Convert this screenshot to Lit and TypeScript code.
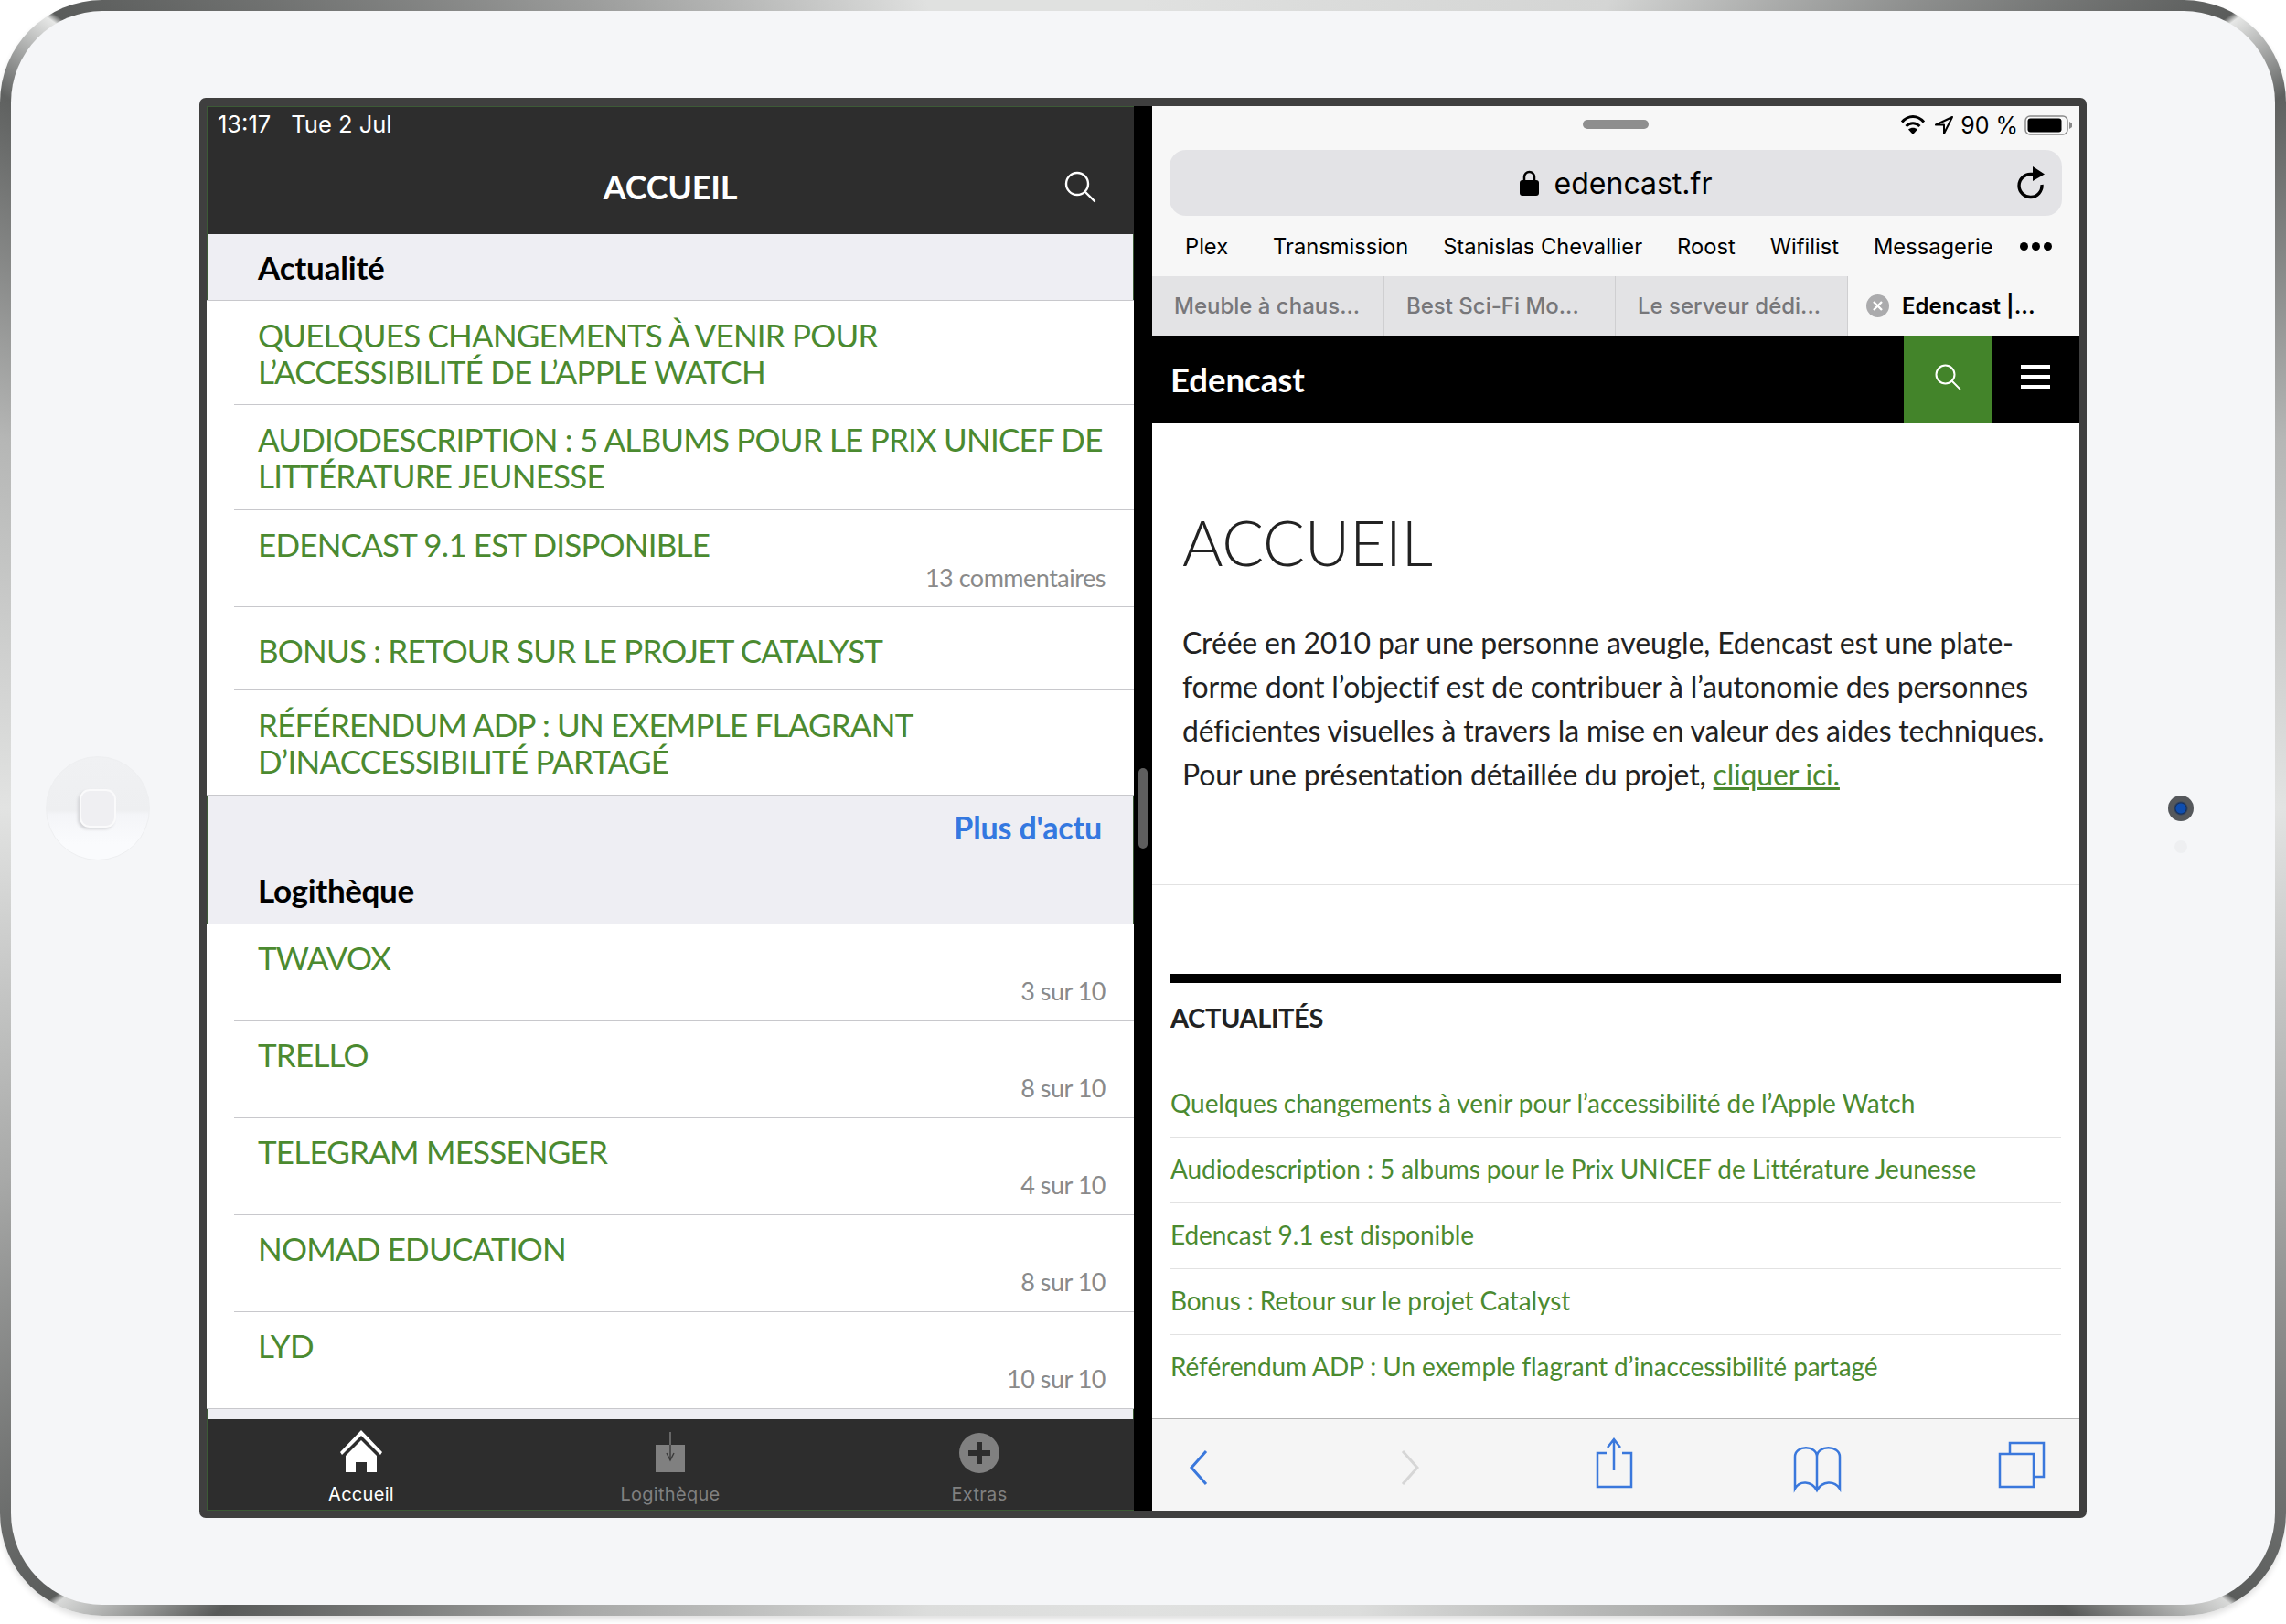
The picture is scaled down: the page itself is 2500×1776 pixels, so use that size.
import { LitElement, html, css } from "lit";
import { customElement } from "lit/decorators.js";

const news = [
  { t: ["QUELQUES CHANGEMENTS À VENIR POUR", "L’ACCESSIBILITÉ DE L’APPLE WATCH"], h: 114 },
  { t: ["AUDIODESCRIPTION : 5 ALBUMS POUR LE PRIX UNICEF DE", "LITTÉRATURE JEUNESSE"], h: 115 },
  { t: ["EDENCAST 9.1 EST DISPONIBLE"], meta: "13 commentaires", h: 106 },
  { t: ["BONUS : RETOUR SUR LE PROJET CATALYST"], h: 91, low: true },
  { t: ["RÉFÉRENDUM ADP : UN EXEMPLE FLAGRANT", "D’INACCESSIBILITÉ PARTAGÉ"], h: 115 },
];
const apps = [
  ["TWAVOX", "3 sur 10"],
  ["TRELLO", "8 sur 10"],
  ["TELEGRAM MESSENGER", "4 sur 10"],
  ["NOMAD EDUCATION", "8 sur 10"],
  ["LYD", "10 sur 10"],
];
const siteNews = [
  "Quelques changements à venir pour l’accessibilité de l’Apple Watch",
  "Audiodescription : 5 albums pour le Prix UNICEF de Littérature Jeunesse",
  "Edencast 9.1 est disponible",
  "Bonus : Retour sur le projet Catalyst",
  "Référendum ADP : Un exemple flagrant d’inaccessibilité partagé",
];
const marks = ["Plex", "Transmission", "Stanislas Chevallier", "Roost", "Wifilist", "Messagerie"];
const tabs = ["Meuble à chaus...", "Best Sci-Fi Mo...", "Le serveur dédi..."];

@customElement("app-root")
export class AppRoot extends LitElement {
  static styles = css`
    :host { display: block; width: 2500px; height: 1776px; background: #fff; overflow: hidden; font-family: "Lato", "Liberation Sans", sans-serif; }
    * { box-sizing: border-box; }
    .device {
      width: 2500px; height: 1767px; padding: 12px; border-radius: 112px;
      background: conic-gradient(from 0deg,
        #e0e1e0 0deg, #d4d5d4 30deg, #5a5c5b 53.9deg, #e6e7e6 54.2deg, #5f6160 58deg, #b5b6b5 72deg, #e2e3e2 90deg,
        #e2e3e2 90deg, #a8a9a8 108deg, #5a5c5b 125.9deg, #d8d9d8 126.2deg, #585a59 131deg, #a8a9a8 145deg, #dcdddc 165deg,
        #e0e1e0 180deg, #dcdddc 195deg, #a8a9a8 215deg, #585a59 229deg, #d8d9d8 233.8deg, #5a5c5b 234.1deg, #a8a9a8 252deg, #e2e3e2 270deg,
        #b5b6b5 288deg, #5f6160 302deg, #e6e7e6 305.8deg, #5a5c5b 306.1deg, #9a9b9a 325deg, #e0e1e0 345deg, #e0e1e0 360deg);
      box-shadow: 0 4px 6px rgba(0,0,0,.12);
    }
    .face {
      height: 100%; background: #f5f6f8; border-radius: 100px;
      display: grid; grid-template-columns: 206px 2064px 1fr; align-items: center;
    }
    .home-col { display: flex; justify-content: center; padding-right: 16px; }
    .home {
      width: 114px; height: 114px; border-radius: 50%; display: flex; align-items: center; justify-content: center;
      background: linear-gradient(#f0f1f3 0%, #eeeff1 52%, #f4f5f8 56%, #fafbfd 85%);
      border: 1px solid #eeeff1;
    }
    .home i { display: block; width: 40px; height: 42px; border-radius: 11px; background: #efeff2; border: 2px solid #fafafb; box-shadow: -2px 2px 3px #d4d5d8; }
    .cam-col { display: flex; flex-direction: column; align-items: center; gap: 21px; padding-top: 35px; }
    .cam { width: 28px; height: 28px; border-radius: 50%; background: radial-gradient(circle, #0f4eb0 0 5px, #14305f 6px, #55585c 8px, #55585c 100%); }
    .sensor { width: 14px; height: 14px; border-radius: 50%; background: #eeeff1; }

    .screen {
      position: relative; height: 1553px; background: #3f3f3f; padding: 9px 8px 8px; border-radius: 7px;
      display: grid; grid-template-columns: 1014px 20px 1014px;
    }
    .divider { background: #000; }
    .handle { position: absolute; left: 1027px; top: 733px; width: 10px; height: 88px; border-radius: 5px; background: #5e5e5e; }

    .left { background: #eeeef3; display: flex; flex-direction: column; height: 1536px; box-shadow: inset 0 0 0 1px #3c5a36; }
    .statusbar-l { height: 140px; background: #2d2d2d; color: #fff; position: relative; display: flex; flex-direction: column; box-shadow: inset 0 1px 0 #3c5a36, inset 1px 0 0 #3c5a36; }
    .time { font: 400 25.5px "Inter", sans-serif; padding: 0 0 0 12px; display: flex; gap: 22px; height: 38px; align-items: center; }
    .navbar { flex: 1; display: flex; align-items: center; justify-content: center; position: relative; padding-bottom: 2px; }
    .navbar b { font: 700 36px "Lato", sans-serif; letter-spacing: -.2px; }
    .navbar svg { position: absolute; left: 937px; top: 32px; }
    .section { height: 73px; padding: 0 0 0 56px; display: flex; align-items: center; font: 700 35px "Lato", sans-serif; color: #000; border-bottom: 1px solid #c8c8cc; letter-spacing: -.2px; }
    .rows { background: #fff; }
    .row { position: relative; padding: 17px 31px 0 56px; }
    .row.low { padding-top: 27px; }
    .rows.apps .row { padding-top: 16px; }
    .row::after { content: ""; position: absolute; left: 30px; right: 0; bottom: 0; height: 1px; background: #c8c8cc; }
    .row.last::after { left: 0; }
    .ttl { font: 400 35px/40px "Lato", sans-serif; color: #4b8a30; letter-spacing: -.8px; white-space: nowrap; }
    .meta { font: 400 27px/32px "Lato", sans-serif; color: #8a8a8a; text-align: right; margin-top: 1px; letter-spacing: -.5px; }
    .more { height: 65px; display: flex; justify-content: flex-end; align-items: center; padding: 4px 35px 0 0; font: 700 34px "Lato", sans-serif; color: #3478e0; letter-spacing: -.15px; }
    .section.lg { height: 76px; letter-spacing: -.35px; }
    .spacer { flex: 1; }
    .tabbar { height: 100px; background: #2d2d2d; display: grid; grid-template-columns: repeat(3, 338px); justify-content: space-between; flex: none; box-shadow: inset 0 -1px 0 #3c5a36, inset 1px 0 0 #3c5a36; }
    .tab { display: flex; flex-direction: column; align-items: center; color: #808080; font: 400 20px "Inter", sans-serif; padding-top: 12px; letter-spacing: .3px; }
    .tab.on { color: #fff; }
    .tab svg { display: block; height: 47px; margin-bottom: 11px; }

    .right { background: #f7f7f7; height: 1536px; display: flex; flex-direction: column; font-family: "Inter", sans-serif; }
    .statusbar-r { height: 48px; position: relative; display: flex; justify-content: flex-end; align-items: center; padding: 0 8px 6px 0; gap: 7px; color: #000; font: 400 25px "Inter", sans-serif; }
    .pill { position: absolute; left: 471px; top: 15px; width: 72px; height: 10px; border-radius: 5px; background: #8e8e8e; }
    .url { height: 72px; margin: 0 19px; background: #e3e3e6; border-radius: 18px; display: flex; align-items: center; justify-content: center; gap: 17px; position: relative; font: 400 32px "Inter", sans-serif; color: #000; }
    .url .reload { position: absolute; right: 17px; top: 18px; }
    .marks { height: 66px; display: flex; align-items: center; gap: 38px; padding: 0 0 0 36px; font: 400 23.7px "Inter", sans-serif; color: #000; white-space: nowrap; }
    .marks span:first-child { margin-right: 11px; }
    .dots { display: flex; gap: 4px; margin-left: -9px; }
    .dots i { width: 9px; height: 9px; border-radius: 50%; background: #000; }
    .tabs { height: 65px; display: grid; grid-template-columns: 254px 253px 254px 253px; font: 500 24px "Inter", sans-serif; color: #77777a; }
    .t { background: #e3e3e5; display: flex; align-items: center; padding-left: 24px; border-right: 1px solid #cfcfd1; white-space: nowrap; }
    .t.on { background: #f7f7f7; color: #000; font-weight: 600; border: 0; padding-left: 20px; gap: 14px; }
    .sitebar { height: 96px; background: #000; color: #fff; display: flex; align-items: center; padding-left: 20px; font: 700 36.5px "Lato", sans-serif; }
    .sitebar .name { flex: 1; }
    .sbtn { width: 96px; height: 96px; display: flex; align-items: center; justify-content: center; padding-bottom: 6px; }
    .sbtn.green { background: #43842a; }
    .content { flex: 1; background: #fff; font-family: "Lato", sans-serif; min-height: 0; }
    .intro { height: 505px; padding: 88px 20px 0 33px; border-bottom: 1px solid #e2e2e2; }
    .intro h1 { margin: 0; font: 300 68px/84px "Lato", sans-serif; color: #222; letter-spacing: -.3px; }
    .intro p { margin: 44px 0 0; font: 400 32px/48px "Lato", sans-serif; color: #222; letter-spacing: -.18px; white-space: nowrap; }
    .intro a { color: #4b8a30; text-decoration: underline; }
    .news { padding: 0 20px; margin-top: 97px; }
    .news .bar { height: 10px; background: #000; }
    .news h2 { margin: 0; font: 700 29px/76px "Lato", sans-serif; color: #222; letter-spacing: -.4px; }
    .news ul { list-style: none; margin: 21px 0 0; padding: 0; }
    .news li { height: 72px; display: flex; align-items: center; border-bottom: 1px solid #e2e2e2; font: 400 28px "Lato", sans-serif; color: #4b8a30; letter-spacing: -.08px; white-space: nowrap; padding-bottom: 4px; }
    .news li:last-child { border: 0; }
    .toolbar { height: 101px; border-top: 1px solid #b4b4b4; background: #f5f5f5; flex: none; display: block; }
    .toolbar svg { display: block; }
  `;

  private search(c: string, s: number) {
    return html`<svg width=${s} height=${s} viewBox="0 0 36 36" fill="none" stroke=${c} stroke-width="2.4" stroke-linecap="round"><circle cx="15" cy="15" r="12"/><path d="M24 24l10 10"/></svg>`;
  }

  render() {
    return html`
    <div class="device"><div class="face">
      <div class="home-col"><div class="home"><i></i></div></div>
      <div class="screen">
        <div class="left">
          <div class="statusbar-l">
            <div class="time"><span>13:17</span><span>Tue 2 Jul</span></div>
            <div class="navbar"><b>ACCUEIL</b>${this.search("#fff", 36)}</div>
          </div>
          <div class="section">Actualité</div>
          <div class="rows">
            ${news.map((n, i) => html`<div class="row ${i === 4 ? "last" : ""} ${n.low ? "low" : ""}" style="height:${n.h}px">
              ${n.t.map((l) => html`<div class="ttl">${l}</div>`)}
              ${n.meta ? html`<div class="meta">${n.meta}</div>` : ""}
            </div>`)}
          </div>
          <div class="more">Plus d'actu</div>
          <div class="section lg">Logithèque</div>
          <div class="rows apps">
            ${apps.map((a, i) => html`<div class="row ${i === 4 ? "last" : ""}" style="height:106px">
              <div class="ttl">${a[0]}</div><div class="meta">${a[1]}</div>
            </div>`)}
          </div>
          <div class="spacer"></div>
          <div class="tabbar">
            <div class="tab on">
              <svg width="50" height="47" viewBox="0 0 50 47"><path fill="#fff" d="M25 0L48 24l-2 3L25 6 4 27l-2-3z"/><path fill="#fff" d="M25 11L42 28V46H31V35H19V46H8V28z"/></svg>
              Accueil</div>
            <div class="tab">
              <svg width="50" height="47" viewBox="0 0 50 47"><path fill="#808080" d="M9 16H41V46H9z"/><path fill="none" stroke="#3a3a3a" stroke-width="1.4" d="M25 16V33M21 25l4 8 4-8"/><path fill="none" stroke="#808080" stroke-width="1.4" d="M25 2V16"/></svg>
              Logithèque</div>
            <div class="tab">
              <svg width="50" height="47" viewBox="0 0 50 47"><circle cx="25" cy="25" r="22" fill="#808080"/><path fill="#2d2d2d" d="M22 13h6v9h9v6h-9v9h-6v-9h-9v-6h9z"/></svg>
              Extras</div>
          </div>
        </div>
        <div class="divider"></div>
        <div class="right">
          <div class="statusbar-r">
            <div class="pill"></div>
            <svg width="28" height="22" viewBox="0 0 28 22"><path fill="none" stroke="#000" stroke-width="3" d="M2 7.5C9-.5 19-.5 26 7.5M6.5 12c4.500-4.500 10.500-4.500 15 0"/><path d="M14 21l-5-5.500c3-2.500 7-2.500 10 0z"/></svg>
            <svg width="22" height="22" viewBox="0 0 22 22" style="margin-left:2px"><path fill="none" stroke="#000" stroke-width="2" stroke-linejoin="round" d="M20 2L2 10.500h9V20z"/></svg>
            <span>90 %</span>
            <svg width="52" height="22" viewBox="0 0 52 22"><rect x="1" y="1" width="46" height="20" rx="5" fill="none" stroke="#8a8a8a" stroke-width="1.500"/><rect x="3.500" y="3.500" width="37" height="15" rx="3" fill="#000"/><path d="M49 7l3 2v4l-3 2z" fill="#8a8a8a"/></svg>
          </div>
          <div class="url">
            <svg width="21" height="28" viewBox="0 0 21 28"><path fill="none" stroke="#000" stroke-width="2.500" d="M5 12V7.500a5.500 5.500 0 0 1 11 0V12"/><rect x="0" y="11" width="21" height="17" rx="3"/></svg>
            <span>edencast.fr</span>
            <svg class="reload" width="32" height="36" viewBox="0 0 32 36"><path fill="none" stroke="#000" stroke-width="3.400" d="M27 20A12.500 12.500 0 1 1 15 8.500h6"/><path d="M17 0l13 8.500L17 16z"/></svg>
          </div>
          <div class="marks">
            ${marks.map((m) => html`<span>${m}</span>`)}
            <div class="dots"><i></i><i></i><i></i></div>
          </div>
          <div class="tabs">
            ${tabs.map((t) => html`<div class="t">${t}</div>`)}
            <div class="t on">
              <svg width="25" height="25" viewBox="0 0 25 25"><circle cx="12.500" cy="12.500" r="12.500" fill="#ababad"/><path stroke="#fff" stroke-width="2.400" d="M8 8l9 9M17 8l-9 9"/></svg>
              <span>Edencast |...</span>
            </div>
          </div>
          <div class="sitebar">
            <span class="name">Edencast</span>
            <div class="sbtn green">${this.search("#fff", 30)}</div>
            <div class="sbtn">
              <svg width="32" height="26" viewBox="0 0 32 26"><path fill="#fff" d="M0 0H32V4H0zM0 11H32V15H0zM0 22H32V26H0z"/></svg>
            </div>
          </div>
          <div class="content">
            <div class="intro">
              <h1>ACCUEIL</h1>
              <p>Créée en 2010 par une personne aveugle, Edencast est une plate-<br>forme dont l’objectif est de contribuer à l’autonomie des personnes<br>déficientes visuelles à travers la mise en valeur des aides techniques.<br>Pour une présentation détaillée du projet, <a>cliquer ici.</a></p>
            </div>
            <div class="news">
              <div class="bar"></div>
              <h2>ACTUALITÉS</h2>
              <ul>${siteNews.map((n) => html`<li>${n}</li>`)}</ul>
            </div>
          </div>
          <div class="toolbar">
            <svg width="1014" height="100" viewBox="0 0 1014 100" fill="none" stroke="#3a78dc" stroke-width="2.500">
              <path stroke-width="3" d="M59 35L43 53l16 18"/>
              <path stroke="#d6d6d6" stroke-width="3" d="M274 35l16 18-16 18"/>
              <path d="M497 37h-10v37h37V37h-10M505 23v33M498 31l7-9 7 9"/>
              <path d="M703 76V41c0-13 24-13 24 0 0-13 25-13 25 0v35c-6-9-19-9-25 2-6-11-19-11-24-2zM727 41v37"/>
              <path d="M927 38h37v36h-37zM938 38V26h37v37h-11"/>
            </svg>
          </div>
        </div>
        <div class="handle"></div>
      </div>
      <div class="cam-col"><div class="cam"></div><div class="sensor"></div></div>
    </div></div>`;
  }
}
